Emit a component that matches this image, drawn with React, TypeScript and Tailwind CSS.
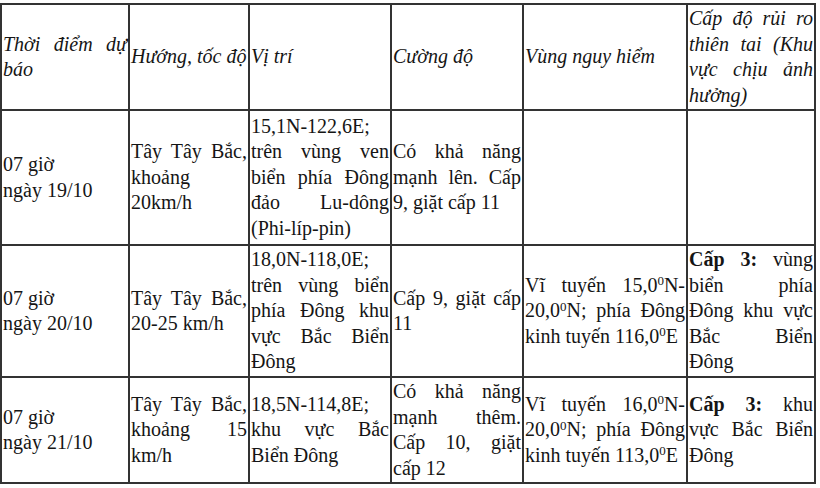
import React from 'react';

type Cell = React.ReactNode;

const head: Cell[] = [
  <>Thời điểm dự báo</>,
  <>Hướng, tốc độ</>,
  <>Vị trí</>,
  <>Cường độ</>,
  <>Vùng nguy hiểm</>,
  <>Cấp độ rủi ro thiên tai (Khu vực chịu ảnh hưởng)</>,
];

const sup = (v: string) => <sup className="text-[13px]">{v}</sup>;

const rows: { h: string; cells: Cell[] }[] = [
  {
    h: 'h-[135px]',
    cells: [
      <>07 giờ<br />ngày 19/10</>,
      <>Tây Tây Bắc, khoảng 20km/h</>,
      <>15,1N-122,6E; trên vùng ven biển phía Đông đảo Lu-dông (Phi-líp-pin)</>,
      <>Có khả năng mạnh lên. Cấp 9, giặt cấp 11</>,
      null,
      null,
    ],
  },
  {
    h: 'h-[132px]',
    cells: [
      <>07 giờ<br />ngày 20/10</>,
      <>Tây Tây Bắc, 20-25 km/h</>,
      <>18,0N-118,0E; trên vùng biển phía Đông khu vực Bắc Biển Đông</>,
      <>Cấp 9, giặt cấp 11</>,
      <>Vĩ tuyến 15,0{sup('0')}N-20,0{sup('0')}N; phía Đông kinh tuyến 116,0{sup('0')}E</>,
      <span className="[word-spacing:2px]"><b>Cấp 3:</b> vùng biển phía Đông khu vực Bắc Biển Đông</span>,
    ],
  },
  {
    h: 'h-[106px]',
    cells: [
      <>07 giờ<br />ngày 21/10</>,
      <>Tây Tây Bắc, khoảng 15 km/h</>,
      <>18,5N-114,8E; khu vực Bắc Biển Đông</>,
      <>Có khả năng mạnh thêm. Cấp 10, giặt cấp 12</>,
      <>Vĩ tuyến 16,0{sup('0')}N-20,0{sup('0')}N; phía Đông kinh tuyến 113,0{sup('0')}E</>,
      <><b>Cấp 3:</b> khu vực Bắc Biển Đông</>,
    ],
  },
];

const widths = ['w-[128px]', 'w-[120px]', 'w-[142px]', 'w-[132px]', 'w-[164px]', 'w-[128px]'];

export default function App() {
  return (
    <div className="w-[820px] h-[488px] overflow-hidden bg-white pt-[3px] text-[#151515] [font-family:'Liberation_Serif','Times_New_Roman',serif] text-[20px] leading-[25.5px]">
      <table className="table-fixed border-collapse w-[814px]">
        <colgroup>
          {widths.map((w, i) => (
            <col key={i} className={w} />
          ))}
        </colgroup>
        <thead>
          <tr className="h-[106px]">
            {head.map((c, i) => (
              <th
                key={i}
                className="border-2 border-[#333] px-px py-0 align-middle text-justify font-normal italic"
              >
                {c}
              </th>
            ))}
          </tr>
        </thead>
        <tbody>
          {rows.map((r, ri) => (
            <tr key={ri} className={r.h}>
              {r.cells.map((c, i) => (
                <td key={i} className="border-2 border-[#333] px-px py-0 align-middle text-justify">
                  {c}
                </td>
              ))}
            </tr>
          ))}
        </tbody>
      </table>
    </div>
  );
}
